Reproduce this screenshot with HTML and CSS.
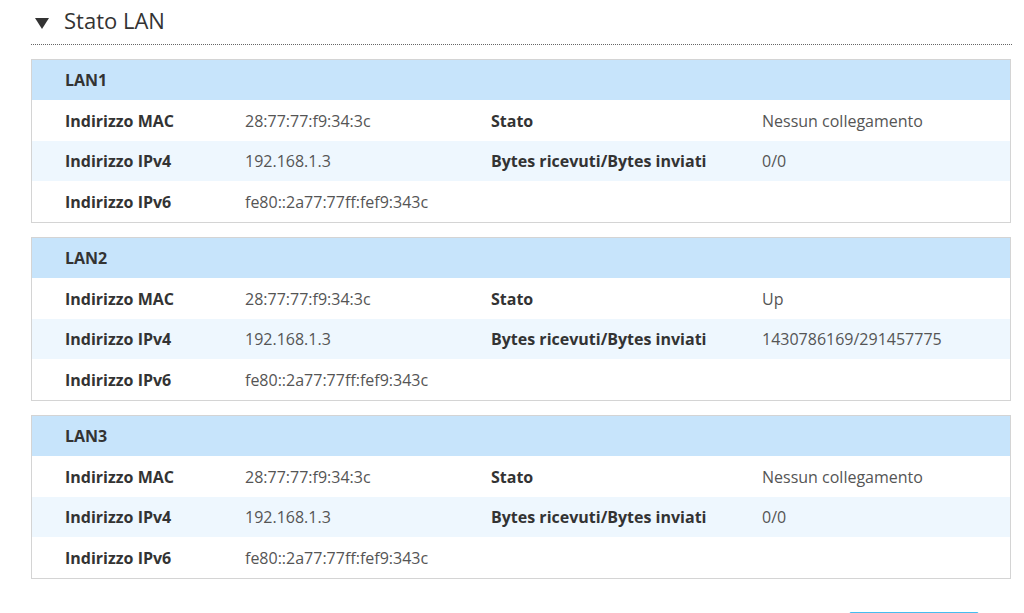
FILE: index.html
```html
<!DOCTYPE html>
<html lang="it">
<head>
    <meta charset="UTF-8">
    <meta name="viewport" content="width=device-width, initial-scale=1.0">
    <title>Stato LAN</title>
    <link rel="stylesheet" href="styles.css">
</head>
<body>
    <div class="section">
        <div class="section-title">
            <span class="arrow"></span>
            <h2>Stato LAN</h2>
        </div>

        <div class="lan-box">
            <div class="lan-head">LAN1</div>
            <div class="lan-row">
                <span class="label">Indirizzo MAC</span>
                <span class="value">28:77:77:f9:34:3c</span>
                <span class="label">Stato</span>
                <span class="value">Nessun collegamento</span>
            </div>
            <div class="lan-row alt">
                <span class="label">Indirizzo IPv4</span>
                <span class="value">192.168.1.3</span>
                <span class="label">Bytes ricevuti/Bytes inviati</span>
                <span class="value">0/0</span>
            </div>
            <div class="lan-row">
                <span class="label">Indirizzo IPv6</span>
                <span class="value">fe80::2a77:77ff:fef9:343c</span>
                <span></span>
                <span></span>
            </div>
        </div>

        <div class="lan-box">
            <div class="lan-head">LAN2</div>
            <div class="lan-row">
                <span class="label">Indirizzo MAC</span>
                <span class="value">28:77:77:f9:34:3c</span>
                <span class="label">Stato</span>
                <span class="value">Up</span>
            </div>
            <div class="lan-row alt">
                <span class="label">Indirizzo IPv4</span>
                <span class="value">192.168.1.3</span>
                <span class="label">Bytes ricevuti/Bytes inviati</span>
                <span class="value">1430786169/291457775</span>
            </div>
            <div class="lan-row">
                <span class="label">Indirizzo IPv6</span>
                <span class="value">fe80::2a77:77ff:fef9:343c</span>
                <span></span>
                <span></span>
            </div>
        </div>

        <div class="lan-box">
            <div class="lan-head">LAN3</div>
            <div class="lan-row">
                <span class="label">Indirizzo MAC</span>
                <span class="value">28:77:77:f9:34:3c</span>
                <span class="label">Stato</span>
                <span class="value">Nessun collegamento</span>
            </div>
            <div class="lan-row alt">
                <span class="label">Indirizzo IPv4</span>
                <span class="value">192.168.1.3</span>
                <span class="label">Bytes ricevuti/Bytes inviati</span>
                <span class="value">0/0</span>
            </div>
            <div class="lan-row">
                <span class="label">Indirizzo IPv6</span>
                <span class="value">fe80::2a77:77ff:fef9:343c</span>
                <span></span>
                <span></span>
            </div>
        </div>

        <div class="actions">
            <div class="button"></div>
        </div>
    </div>
</body>
</html>
```

FILE: styles.css
```css
body {
    font-family: "Open Sans", "Noto Sans", sans-serif;
    margin: 0;
    padding: 0 12px 0 31px;
    background-color: #fff;
    color: #333;
}
.section-title {
    display: flex;
    align-items: center;
    height: 44px;
    border-bottom: 1px dotted #666;
    margin-bottom: 14px;
}
.arrow {
    width: 0;
    height: 0;
    margin: 2px 15px 0 4px;
    border-left: 7px solid transparent;
    border-right: 7px solid transparent;
    border-top: 11px solid #333;
}
.section-title h2 {
    margin: 0 0 4px 0;
    font-size: 22px;
    font-weight: normal;
    color: #333;
}
.lan-box {
    width: 978px;
    border: 1px solid #d4d4d4;
    margin-bottom: 14px;
}
.lan-head {
    height: 40px;
    line-height: 40px;
    padding-left: 33px;
    background-color: #c7e4fb;
    font-size: 16px;
    font-weight: bold;
}
.lan-row {
    display: grid;
    grid-template-columns: 180px 246px 271px 1fr;
    height: 41px;
    align-items: center;
    font-size: 16px;
}
.lan-row.alt {
    height: 40px;
    background-color: #eef7fe;
}
.lan-row span {
    padding-left: 33px;
    white-space: nowrap;
}
.label {
    font-weight: bold;
    color: #333;
}
.value {
    color: #555;
}
.actions {
    display: flex;
    justify-content: flex-end;
    padding: 19px 33px 0 0;
}
.button {
    width: 128px;
    height: 30px;
    background-color: #fff;
    border: 1px solid #45bdef;
    border-radius: 2px;
}
```
